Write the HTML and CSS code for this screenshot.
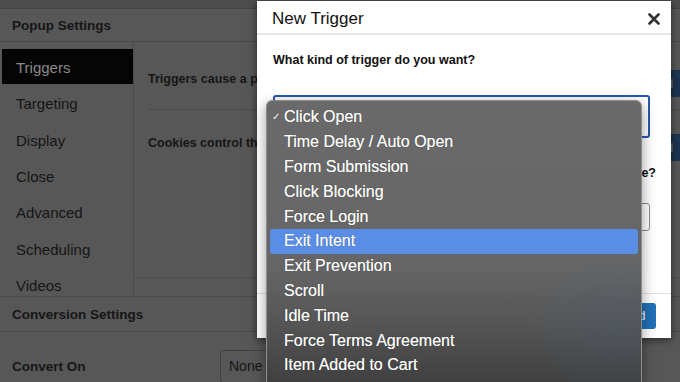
FILE: index.html
```html
<!DOCTYPE html>
<html>
<head>
<meta charset="utf-8">
<link rel="stylesheet" href="styles.css">
</head>
<body>
<div class="page">
  <div class="topbar"></div>
  <div class="box-header">Popup Settings</div>
  <div class="settings">
    <ul class="tabs">
      <li class="tab active">Triggers</li>
      <li class="tab">Targeting</li>
      <li class="tab">Display</li>
      <li class="tab">Close</li>
      <li class="tab">Advanced</li>
      <li class="tab">Scheduling</li>
      <li class="tab">Videos</li>
    </ul>
    <div class="tab-content">
      <div class="row row-first">
        <span class="row-label">Triggers cause a popup to open.</span>
        <span class="btn-dark">Add</span>
      </div>
      <div class="row row-second">
        <span class="row-label">Cookies control the repeat display of a popup.</span>
        <span class="btn-dark">Add</span>
      </div>
    </div>
  </div>
  <div class="box-header conv-header">Conversion Settings</div>
  <div class="convert-row">
    <span class="convert-label">Convert On</span>
    <span class="select-none">None</span>
  </div>
</div>

<div class="modal">
  <div class="modal-header">
    <span class="modal-title">New Trigger</span>
    <svg class="modal-close" width="12" height="12" viewBox="0 0 12 12"><path d="M1.5 1.5 L10.5 10.5 M10.5 1.5 L1.5 10.5" stroke="#333" stroke-width="2.6" stroke-linecap="round"/></svg>
  </div>
  <div class="modal-body">
    <div class="field-label">What kind of trigger do you want?</div>
    <div class="select-box"></div>
    <div class="field-label field-right"><span>Choose which cookies will disable this trigger while active?</span></div>
    <div class="input-box"></div>
  </div>
  <div class="modal-footer">
    <span class="btn-primary">Add</span>
  </div>
</div>

<ul class="dropdown">
  <li class="opt checked"><span class="check">&#x2713;</span>Click Open</li>
  <li class="opt">Time Delay / Auto Open</li>
  <li class="opt">Form Submission</li>
  <li class="opt">Click Blocking</li>
  <li class="opt">Force Login</li>
  <li class="opt selected">Exit Intent</li>
  <li class="opt">Exit Prevention</li>
  <li class="opt">Scroll</li>
  <li class="opt">Idle Time</li>
  <li class="opt">Force Terms Agreement</li>
  <li class="opt">Item Added to Cart</li>
</ul>
</body>
</html>
```

FILE: styles.css
```css
* { box-sizing: border-box; }
html, body {
  margin: 0;
  padding: 0;
  width: 680px;
  height: 382px;
  overflow: hidden;
  background: #575757;
  font-family: "Liberation Sans", Arial, sans-serif;
  color: #161616;
}
.page {
  width: 680px;
  height: 382px;
  display: flex;
  flex-direction: column;
}
.topbar {
  height: 9px;
  background: #4d4d4d;
  border-bottom: 1px solid #454545;
  flex: none;
}
.box-header {
  flex: none;
  height: 33px;
  padding-left: 12px;
  display: flex;
  align-items: center;
  font-weight: bold;
  font-size: 13.5px;
  border-bottom: 1px solid #494949;
}
.settings {
  flex: none;
  height: 255px;
  display: flex;
  overflow: hidden;
  border-bottom: 1px solid #4a4a4a;
}
.tabs {
  list-style: none;
  margin: 0;
  padding: 7px 0 0 0;
  width: 134px;
  flex: none;
  border-right: 1px solid #4c4c4c;
}
.tab {
  height: 36.33px;
  line-height: 37px;
  padding-left: 14px;
  font-size: 15px;
  color: #151515;
  border-bottom: 1px solid #5b5b5b;
  margin-left: 2px;
}
.tab.active {
  background: #050505;
  color: #8a8a8a;
  height: 35px;
  line-height: 37px;
  margin-bottom: 1.33px;
  border-bottom: none;
}
.tab-content {
  flex: 1;
  height: 236px;
  padding-left: 14px;
  border-bottom: 1px solid #4c4c4c;
  overflow: hidden;
}
.row {
  display: flex;
  justify-content: space-between;
  align-items: flex-start;
}
.row-first {
  padding-top: 28px;
  height: 68px;
  border-bottom: 1px solid #4b4b4b;
}
.row-second {
  padding-top: 24px;
}
.row-label {
  font-weight: bold;
  font-size: 12.5px;
  line-height: 18px;
  white-space: nowrap;
}
.btn-dark {
  width: 40px;
  height: 27px;
  background: #1d3552;
  color: #6f7f95;
  font-size: 13px;
  line-height: 27px;
  padding-left: 10px;
  border-radius: 3px 0 0 3px;
}
.conv-header {
  height: 35px;
  padding-top: 1px;
}
.convert-row {
  flex: 1;
  display: flex;
  align-items: center;
  padding: 18px 0 0 12px;
}
.convert-label {
  width: 208px;
  font-weight: bold;
  font-size: 13.5px;
}
.select-none {
  height: 33px;
  width: 60px;
  border: 1px solid #3f3f3f;
  border-radius: 3px;
  padding-left: 8px;
  line-height: 31px;
  font-size: 14px;
  color: #151515;
}

/* Modal */
.modal {
  position: absolute;
  left: 257px;
  top: 1px;
  width: 414px;
  height: 337px;
  background: #fff;
  box-shadow: 0 2px 8px rgba(0,0,0,.55);
  display: flex;
  flex-direction: column;
}
.modal-header {
  height: 34px;
  flex: none;
  border-bottom: 2px solid #e6e6e6;
  display: flex;
  align-items: center;
  justify-content: space-between;
  padding: 3px 11px 0 15px;
}
.modal-title {
  font-size: 17px;
  color: #111;
}
.modal-close {
  display: block;
}
.modal-body {
  flex: 1;
  padding: 17px 21px 0 16px;
}
.field-label {
  font-weight: bold;
  font-size: 12.5px;
  line-height: 16px;
  color: #111;
  white-space: nowrap;
}
.field-right {
  display: flex;
  justify-content: flex-end;
  margin-right: -6px;
  overflow: hidden;
  margin-top: 27px;
}
.field-right span {
  flex: none;
}
.select-box {
  margin-top: 27px;
  height: 43px;
  border: 2px solid #2458b3;
  border-radius: 3px;
}
.input-box {
  margin-top: 22px;
  height: 28px;
  border: 1px solid #8c8c8c;
  border-radius: 3px;
}
.modal-footer {
  flex: none;
  height: 45px;
  border-top: 1px solid #e2e2e2;
  display: flex;
  justify-content: flex-end;
  align-items: flex-start;
  padding: 9px 15px 0 0;
}
.btn-primary {
  height: 26px;
  width: 44px;
  background: #2270b6;
  border-radius: 3px;
  color: #fff;
  font-size: 13px;
  line-height: 26px;
  text-align: center;
}

/* Dropdown */
.dropdown {
  position: absolute;
  left: 266px;
  top: 100px;
  width: 376px;
  height: 300px;
  margin: 0;
  padding: 4.4px 0 0 0;
  list-style: none;
  border: 1px solid #8e8e8e;
  border-radius: 6px;
  background:
    radial-gradient(ellipse 90px 80px at 350px 225px, rgba(70,95,125,.22), rgba(70,95,125,0)),
    linear-gradient(to bottom, #6a6a6a 0%, #666 55%, #555 75%, #3a3a3a 100%);
  box-shadow: 0 4px 14px rgba(0,0,0,.4);
}
.opt {
  position: relative;
  height: 24.8px;
  line-height: 24.8px;
  margin: 0 3px;
  padding-left: 14px;
  font-size: 16px;
  color: #fff;
  text-shadow: 0 0 1px rgba(0,0,0,.45), 0 0 0.4px #fff;
  white-space: nowrap;
}
.opt.selected {
  background: #5a8ee6;
  border-radius: 3px;
}
.check {
  position: absolute;
  left: 2px;
  top: 0;
  font-size: 10px;
  color: #e8e8e8;
}
```
